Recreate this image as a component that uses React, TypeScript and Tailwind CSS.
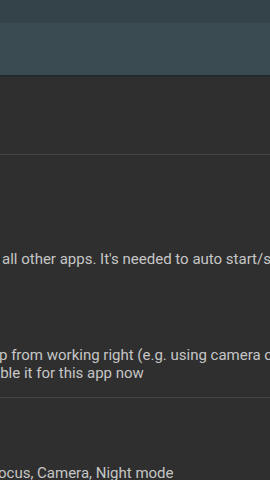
export default function App() {
    return (
        <div className="w-[270px] h-[480px] overflow-hidden bg-[#2f2f2f] text-[#c6c6c6]" style={{ fontFamily: 'Roboto, "Noto Sans", sans-serif' }}>
            {/* app bar */}
            <div className="h-[23px] bg-[#334349]"></div>
            <div className="h-[54px] bg-[#3a4b51] border-b-2 border-[#24292d]"></div>

            {/* first item, titles cut off */}
            <div className="h-[78px] border-b border-[#454545]"></div>

            <div className="flex flex-col pt-[95px] pb-[15px] border-b border-[#454545] text-[15px] leading-[18px] whitespace-nowrap">
                <p className="ml-[2px]">all other apps. It's needed to auto start/stop</p>
                <div className="mt-[78px] flex flex-col">
                    <p className="-ml-[1px]">p from working right (e.g. using camera or</p>
                    <p className="-ml-[8px]">able it for this app now</p>
                </div>
            </div>

            <div className="pt-[66px] text-[15px] leading-[18px] whitespace-nowrap">
                <p className="-ml-[2px]">ocus, Camera, Night mode</p>
            </div>
        </div>
    )
}
